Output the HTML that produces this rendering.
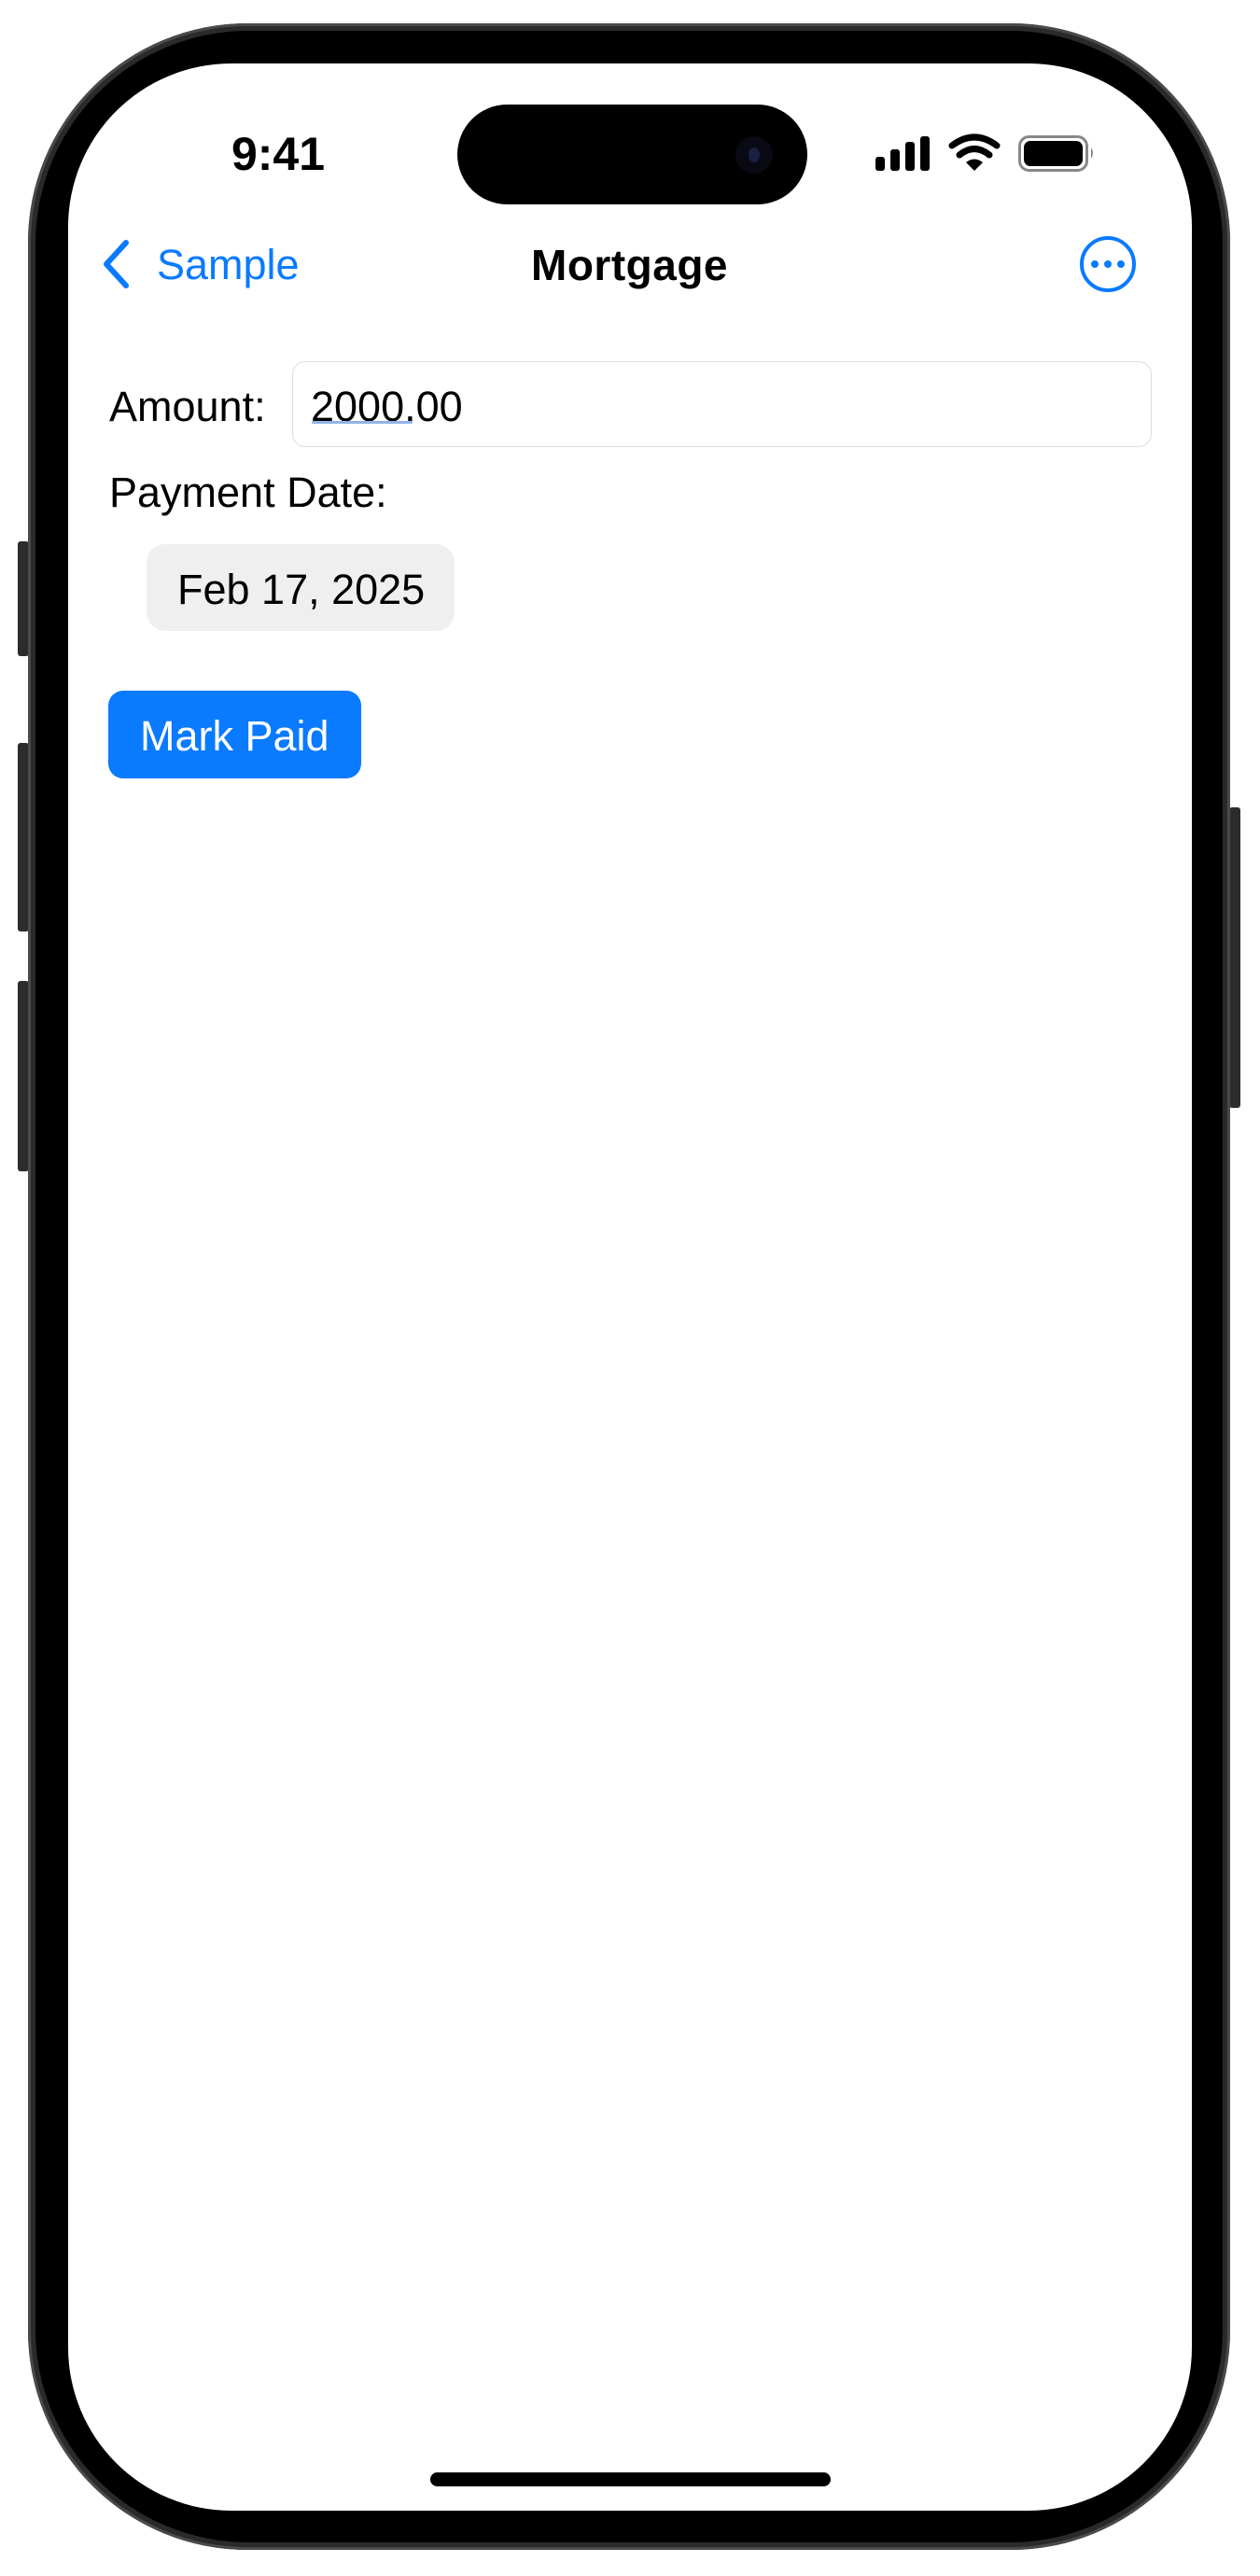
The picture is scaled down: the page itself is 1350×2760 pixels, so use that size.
<!DOCTYPE html>
<html><head><meta charset="utf-8"><style>
*{margin:0;padding:0;box-sizing:border-box}
body{width:1350px;height:2760px;background:#fff;position:relative;overflow:hidden;font-family:"Liberation Sans",sans-serif}
.abs{position:absolute}
.outer{left:30px;top:25px;width:1288px;height:2707px;border-radius:235px;background:#2a2a2a;box-shadow:inset 0 0 0 3px #4a4a4a}
.bezel{left:38px;top:33px;width:1272px;height:2691px;border-radius:228px;background:#000}
.screen{left:73px;top:68px;width:1204px;height:2622px;border-radius:175px;background:#fff;overflow:hidden}
.btn{background:#2c2c2c;border-radius:3px}
.t{position:absolute;white-space:nowrap;font-size:45px;color:#000;line-height:1}
</style></head><body>
<div class="abs btn" style="left:19px;top:580px;width:12px;height:123px"></div>
<div class="abs btn" style="left:19px;top:796px;width:12px;height:202px"></div>
<div class="abs btn" style="left:19px;top:1051px;width:12px;height:204px"></div>
<div class="abs btn" style="left:1317px;top:865px;width:12px;height:322px"></div>
<div class="abs outer"></div>
<div class="abs bezel"></div>
<div class="abs screen"></div>
<div class="abs" style="left:490px;top:112px;width:375px;height:107px;border-radius:54px;background:#000"></div>
<div class="abs" style="left:788px;top:146px;width:40px;height:40px;border-radius:50%;background:#0a0a14"></div>
<div class="abs" style="left:802px;top:158px;width:12px;height:16px;border-radius:50%;background:#1a2040"></div>
<div class="t" style="left:245px;top:140px;font-size:50px;font-weight:bold;width:106px;text-align:center">9:41</div>
<svg class="abs" style="left:930px;top:140px" width="260" height="50">
<rect x="8" y="28" width="10" height="15" rx="3"/>
<rect x="24" y="20" width="10" height="23" rx="3"/>
<rect x="40" y="12" width="10" height="31" rx="3"/>
<rect x="56" y="6" width="10" height="37" rx="3"/>
<path d="M90 16 Q114 -2 138 16" stroke="#000" stroke-width="7" fill="none" stroke-linecap="round"/>
<path d="M98 26 Q114 13 130 26" stroke="#000" stroke-width="7" fill="none" stroke-linecap="round"/>
<path d="M105 34 Q114 27 123 34 L114 43 Z" fill="#000"/>
<rect x="162.5" y="6.5" width="72" height="36" rx="10" fill="none" stroke="#888" stroke-width="3"/>
<rect x="167" y="11" width="63" height="27" rx="7"/>
<path d="M239 18 Q243 24 239 30 Z" fill="#888"/>
</svg>
<svg class="abs" style="left:104px;top:255px" width="40" height="56"><path d="M31 5 L10 28 L31 51" stroke="#0a7aff" stroke-width="6" fill="none" stroke-linecap="round" stroke-linejoin="round"/></svg>
<div class="t" style="left:168px;top:261px;color:#0a7aff;font-size:45px">Sample</div>
<div class="t" style="left:569px;top:261px;font-size:46px;font-weight:bold;letter-spacing:0.5px">Mortgage</div>
<svg class="abs" style="left:1155px;top:251px" width="64" height="64"><circle cx="32" cy="32" r="28" stroke="#0a7aff" stroke-width="4" fill="none"/><circle cx="18" cy="32" r="4" fill="#0a7aff"/><circle cx="32" cy="32" r="4" fill="#0a7aff"/><circle cx="46" cy="32" r="4" fill="#0a7aff"/></svg>
<div class="t" style="left:117px;top:413px">Amount:</div>
<div class="abs" style="left:313px;top:387px;width:921px;height:92px;border:1.5px solid #ddd;border-radius:14px"></div>
<div class="t" style="left:333px;top:413px">2000.00</div>
<div class="abs" style="left:334px;top:451px;width:108px;height:3px;background:#8fb4ea;border-radius:2px"></div>
<div class="t" style="left:117px;top:505px">Payment Date:</div>
<div class="abs" style="left:157px;top:583px;width:330px;height:93px;background:#efefef;border-radius:20px"></div>
<div class="t" style="left:190px;top:609px">Feb 17, 2025</div>
<div class="abs" style="left:116px;top:740px;width:271px;height:94px;background:#0a7aff;border-radius:16px"></div>
<div class="t" style="left:150px;top:766px;color:#fff">Mark Paid</div>
<div class="abs" style="left:461px;top:2649px;width:429px;height:15px;background:#000;border-radius:8px"></div>
</body></html>
